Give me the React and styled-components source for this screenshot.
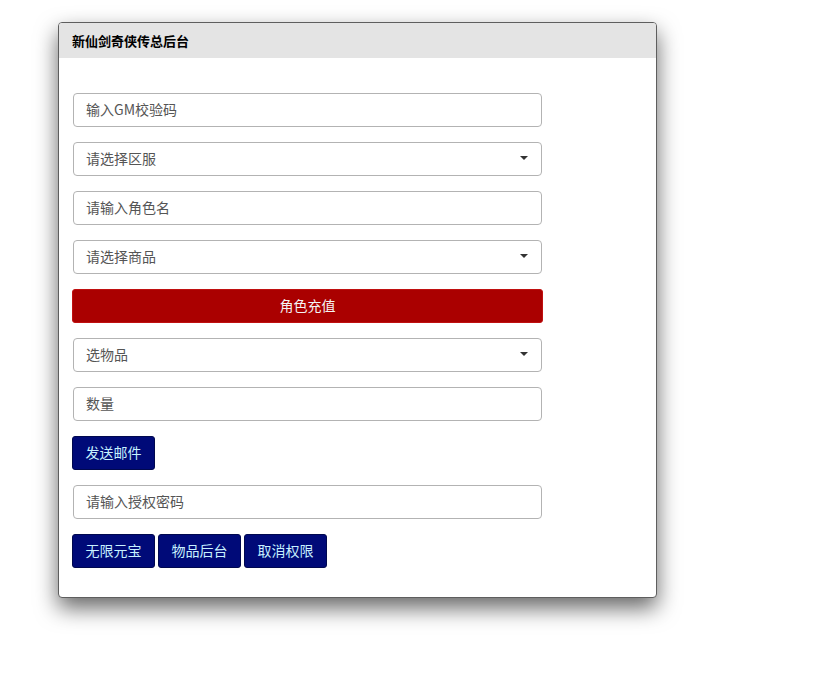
import React from "react";
import styled, { createGlobalStyle } from "styled-components";

const Global = createGlobalStyle`
  html, body { margin: 0; padding: 0; background: #fff; }
  body { font-family: "Noto Sans CJK SC", "Noto Sans", sans-serif; }
  * { box-sizing: border-box; }
`;

const Page = styled.div`
  min-height: 100vh;
  padding: 22px 0 60px 58px;
`;

const Card = styled.div`
  width: 599px;
  background: #fff;
  border: 1px solid #5e5e5e;
  border-radius: 4px;
  box-shadow: 0 10px 22px rgba(0, 0, 0, 0.6);
  overflow: hidden;
`;

const Header = styled.div`
  height: 35px;
  background: #e4e4e4;
  display: flex;
  align-items: center;
  padding-left: 13px;
  font-size: 13px;
  font-weight: 700;
  color: #000;
`;

const Body = styled.div`
  padding: 35px 0 29px 13px;
  display: flex;
  flex-direction: column;
  gap: 15px;
  width: 484px;
`;

const Field = styled.div`
  height: 34px;
  margin: 0 1px;
  border: 1px solid #b3b3b3;
  border-radius: 4px;
  background: #fff;
  display: flex;
  align-items: center;
  justify-content: space-between;
  padding: 0 13px 2px 12px;
  font-size: 14px;
  color: #555;
`;

const Caret = styled.span`
  width: 0;
  height: 0;
  border-left: 4px solid transparent;
  border-right: 4px solid transparent;
  border-top: 4px solid #333;
`;

const WideButton = styled.div`
  height: 34px;
  background: #aa0000;
  border: 1px solid #c01010;
  border-radius: 3px;
  color: #f4f4f4;
  font-size: 14px;
  display: flex;
  align-items: center;
  justify-content: center;
  padding-bottom: 2px;
`;

const Row = styled.div`
  display: flex;
  gap: 3px;
`;

const NavyButton = styled.div`
  height: 34px;
  width: 83px;
  background: #000a78;
  border: 1px solid #00084f;
  border-radius: 3px;
  color: #c7f1ff;
  font-size: 14px;
  display: flex;
  align-items: center;
  justify-content: center;
  padding-bottom: 2px;
`;

const Input = ({ label, select }) => (
  <Field>
    <span>{label}</span>
    {select && <Caret />}
  </Field>
);

export default function App() {
  return (
    <>
      <Global />
      <Page>
        <Card>
          <Header>新仙剑奇侠传总后台</Header>
          <Body>
            <Input label="输入GM校验码" />
            <Input label="请选择区服" select />
            <Input label="请输入角色名" />
            <Input label="请选择商品" select />
            <WideButton>角色充值</WideButton>
            <Input label="选物品" select />
            <Input label="数量" />
            <Row>
              <NavyButton>发送邮件</NavyButton>
            </Row>
            <Input label="请输入授权密码" />
            <Row>
              <NavyButton>无限元宝</NavyButton>
              <NavyButton>物品后台</NavyButton>
              <NavyButton>取消权限</NavyButton>
            </Row>
          </Body>
        </Card>
      </Page>
    </>
  );
}
